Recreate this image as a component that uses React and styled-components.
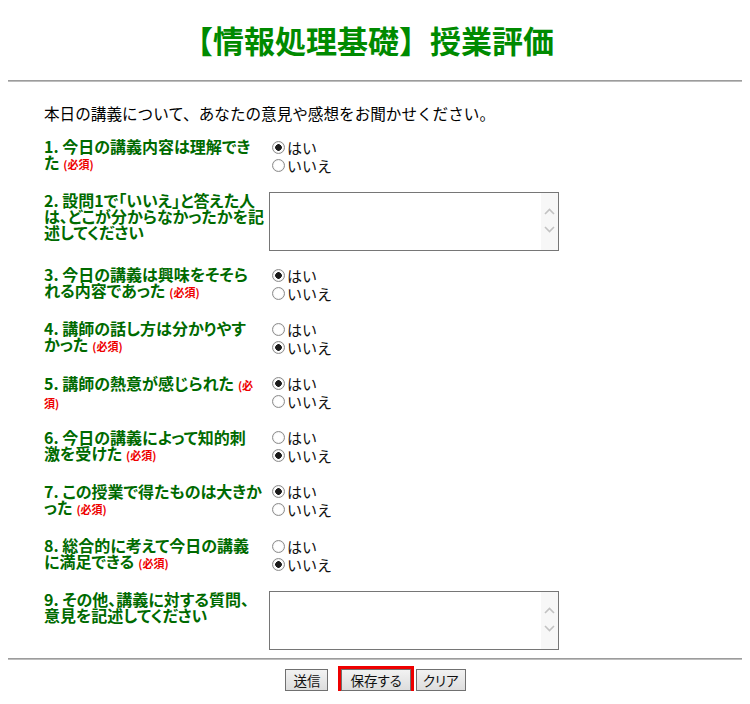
import React from 'react';
import styled, { createGlobalStyle } from 'styled-components';

const GlobalStyle = createGlobalStyle`
  body {
    margin: 8px;
    background: #fff;
    font-family: "Noto Sans CJK JP", "Noto Sans", sans-serif;
    color: #000;
  }
`;

const Title = styled.h1`
  margin: 0;
  padding: 14px 14px 0 0;
  height: 36px;
  line-height: 36px;
  text-align: center;
  font-size: 31px;
  font-weight: 700;
  color: #008a00;
`;

const Rule = styled.hr`
  margin: ${(p) => p.$top || 0}px 0 0;
  height: 0;
  border: none;
  border-top: 1px solid #9c9c9c;
  border-bottom: 1px solid #bdbdbd;
`;

const Intro = styled.p`
  margin: 21px 0 0 36px;
  font-size: 15.6px;
  line-height: 20px;
`;

const Form = styled.div`
  margin: 15px 0 0 36px;
  display: flex;
  flex-direction: column;
`;

const Row = styled.div`
  display: grid;
  grid-template-columns: 225px 1fr;
  align-items: start;
  padding-bottom: ${(p) => p.$gap}px;
`;

// line breaks follow the original page, so the text keeps its own wrapping
const Label = styled.div`
  white-space: pre;
  font-size: 16px;
  line-height: 16px;
  font-weight: 700;
  color: #006a00;
  font-feature-settings: "palt";
`;

const Required = styled.span`
  margin-left: 4px;
  font-size: 11px;
  font-weight: 700;
  color: #ee0000;
`;

const Choices = styled.div`
  display: flex;
  flex-direction: column;
`;

const Choice = styled.label`
  display: flex;
  align-items: center;
  height: 18px;
  font-size: 15px;
  color: #111;
`;

const Radio = styled.input.attrs({ type: 'radio' })`
  appearance: none;
  width: 13px;
  height: 13px;
  margin: 0 2px 0 3px;
  border: 1px solid #8c8c8c;
  border-radius: 50%;
  background: radial-gradient(circle, #fff 0 4px, #e8e8e8 6px);
  &:checked {
    background: radial-gradient(circle, #1c1c1c 0 3px, #fff 3.6px 4px, #e8e8e8 6px);
  }
`;

const TextBox = styled.div`
  display: flex;
  width: 290px;
  height: 59px;
  box-sizing: border-box;
  border: 1px solid #767676;
  background: #fff;
`;

const Area = styled.textarea`
  flex: 1;
  border: none;
  outline: none;
  resize: none;
  margin: 0;
  padding: 2px;
  font: inherit;
  overflow: hidden;
`;

const ScrollStrip = styled.div`
  width: 17px;
  background: #f7f7f7;
  display: flex;
  flex-direction: column;
  align-items: center;
  gap: 11px;
  padding-top: 15px;
`;

const Buttons = styled.div`
  display: flex;
  justify-content: center;
  align-items: center;
  margin-top: 9px;
  padding-left: 1px;
`;

const Button = styled.button`
  height: 22px;
  padding: 0 ${(p) => p.$pad}px;
  margin: 0 ${(p) => p.$right}px 0 0;
  border: 1px solid #707070;
  background: linear-gradient(#f2f2f2, #dddddd);
  font-family: "Noto Sans CJK JP", sans-serif;
  font-size: 13.5px;
  color: #111;
  font-feature-settings: "palt";
  outline: ${(p) => (p.$focus ? '3px solid #ee0000' : 'none')};
`;

const Chevron = ({ up }) => (
  <svg width="11" height="7" viewBox="0 0 11 7">
    <path
      d={up ? 'M1 6 L5.5 1.5 L10 6' : 'M1 1 L5.5 5.5 L10 1'}
      fill="none"
      stroke="#c2c2c2"
      strokeWidth="1.6"
    />
  </svg>
);

const REQ = '(必須)';

const questions = [
  { no: 1, text: '今日の講義内容は理解でき\nた', req: REQ, value: 'yes' },
  { no: 2, text: '設問1で「いいえ」と答えた人\nは、どこが分からなかったかを記\n述してください', type: 'text' },
  { no: 3, text: '今日の講義は興味をそそら\nれる内容であった', req: REQ, value: 'yes' },
  { no: 4, text: '講師の話し方は分かりやす\nかった', req: REQ, value: 'no' },
  { no: 5, text: '講師の熱意が感じられた', req: '(必\n須)', value: 'yes' },
  { no: 6, text: '今日の講義によって知的刺\n激を受けた', req: REQ, value: 'no' },
  { no: 7, text: 'この授業で得たものは大きか\nった', req: REQ, value: 'yes' },
  { no: 8, text: '総合的に考えて今日の講義\nに満足できる', req: REQ, value: 'no' },
  { no: 9, text: 'その他、講義に対する質問、\n意見を記述してください', type: 'text' },
];

const Question = ({ q, last }) => (
  <Row $gap={last ? 0 : q.type === 'text' ? 15 : 18.2}>
    <Label>
      {q.no}. {q.text}
      {q.req && <Required>{q.req}</Required>}
    </Label>
    {q.type === 'text' ? (
      <TextBox>
        <Area />
        <ScrollStrip>
          <Chevron up />
          <Chevron />
        </ScrollStrip>
      </TextBox>
    ) : (
      <Choices>
        <Choice>
          <Radio name={`q${q.no}`} defaultChecked={q.value === 'yes'} />
          はい
        </Choice>
        <Choice>
          <Radio name={`q${q.no}`} defaultChecked={q.value === 'no'} />
          いいえ
        </Choice>
      </Choices>
    )}
  </Row>
);

export default function App() {
  return (
    <>
      <GlobalStyle />
      <Title>【情報処理基礎】授業評価</Title>
      <Rule $top={22} />
      <Intro>本日の講義について、あなたの意見や感想をお聞かせください。</Intro>
      <Form>
        {questions.map((q, i) => (
          <Question key={q.no} q={q} last={i === questions.length - 1} />
        ))}
      </Form>
      <Rule $top={8} />
      <Buttons>
        <Button $pad={7} $right={13}>送信</Button>
        <Button $pad={8} $right={5} $focus>保存する</Button>
        <Button $pad={6} $right={0}>クリア</Button>
      </Buttons>
    </>
  );
}
